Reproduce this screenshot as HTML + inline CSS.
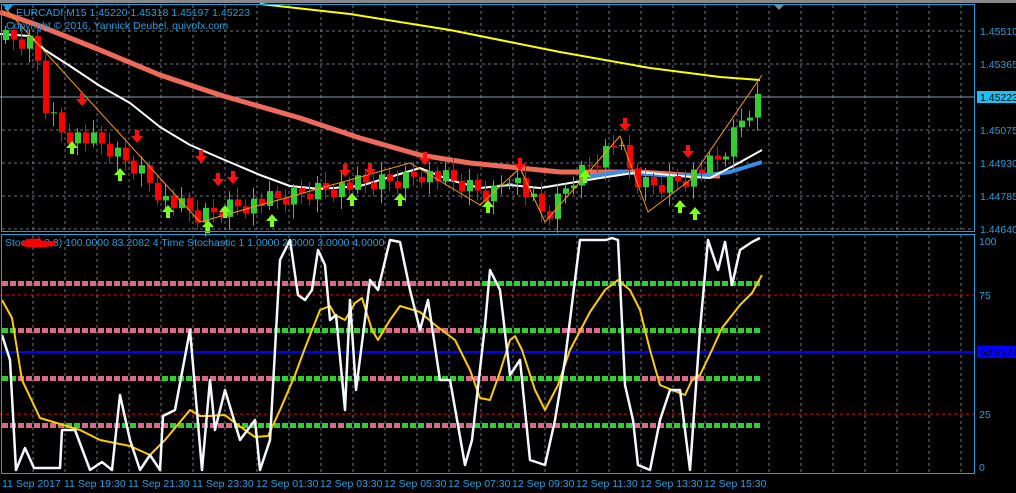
<!DOCTYPE html>
<html><head><meta charset="utf-8"><style>
html,body{margin:0;padding:0;background:#000;width:1016px;height:493px;overflow:hidden}
svg{display:block}
text{font-family:"Liberation Sans",sans-serif;font-size:10.5px}
</style></head><body>
<svg id="s" width="1016" height="493" xmlns="http://www.w3.org/2000/svg">
<rect width="1016" height="493" fill="#000"/>
<rect x="0" y="0" width="1016" height="3" fill="#888"/>
<g id="grid"></g>
<line x1="0" y1="97" x2="975" y2="97" stroke="#8a9aa8" stroke-width="1"/>
<line x1="0" y1="295" x2="975" y2="295" stroke="#e00" stroke-dasharray="3,3"/>
<line x1="0" y1="414" x2="975" y2="414" stroke="#e00" stroke-dasharray="3,3"/>
<g id="dots"></g>
<line x1="0" y1="352" x2="975" y2="352" stroke="#0000ff" stroke-width="2"/>
<g id="main"></g>
<rect x="1.5" y="4.5" width="973" height="227" fill="none" stroke="#1ea0e0"/>
<rect x="1.5" y="234.5" width="973" height="239" fill="none" stroke="#1ea0e0"/>
<polygon points="774,5 784,5 779,10" fill="#888"/>
<polygon points="3,5 13,5 8,11" fill="#1ea0e0"/>
<g fill="#1ea0e0">
<text x="980" y="35">1.45510</text>
<text x="980" y="68">1.45365</text>
<rect x="977" y="91" width="39" height="12" fill="#1ec0f0"/>
<text x="980" y="101" fill="#000">1.45223</text>
<text x="980" y="134">1.45075</text>
<text x="980" y="167">1.44930</text>
<text x="980" y="200">1.44785</text>
<text x="980" y="233">1.44640</text>
<text x="979" y="245">100</text>
<text x="979" y="299">75</text>
<rect x="977" y="346" width="39" height="12" fill="#0000ff"/>
<text x="980" y="356" fill="#000">50.8571</text>
<text x="979" y="418">25</text>
<text x="979" y="471">0</text>
<text x="16" y="16">EURCADf,M15  1.45220 1.45318 1.45197 1.45223</text>
<text x="6" y="29">Copyright © 2016, Yannick Deubel, quivofx.com</text>
<text x="5" y="246">Stoch(5,3,3) 100.0000 83.2082  4 Time Stochastic 1 1.0000 2.0000 3.0000 4.0000</text>
</g>
<path d="M22,243 q8,-6 16,-3 q10,3 18,1 l-2,4 q-12,3 -30,1z M38,236 l3,5" fill="#f00" stroke="#f00"/>
<g id="tl" fill="#1ea0e0"></g>
</svg>
<script>
(function(){
var NS="http://www.w3.org/2000/svg";
function el(p,t,a){var e=document.createElementNS(NS,t);for(var k in a)e.setAttribute(k,a[k]);p.appendChild(e);return e;}
var G=document.getElementById('grid'),M=document.getElementById('main'),D=document.getElementById('dots'),TL=document.getElementById('tl');
for(var x=33;x<975;x+=32){el(G,'line',{x1:x,y1:5,x2:x,y2:231,stroke:'#6a7480','stroke-dasharray':'3,3'});el(G,'line',{x1:x,y1:235,x2:x,y2:473,stroke:'#6a7480','stroke-dasharray':'3,3'});}
[31,64,130,163,196,229].forEach(function(y){el(G,'line',{x1:2,y1:y,x2:975,y2:y,stroke:'#6a7480','stroke-dasharray':'3,3'});});
var labs=["11 Sep 2017","11 Sep 19:30","11 Sep 21:30","11 Sep 23:30","12 Sep 01:30","12 Sep 03:30","12 Sep 05:30","12 Sep 07:30","12 Sep 09:30","12 Sep 11:30","12 Sep 13:30","12 Sep 15:30"];
labs.forEach(function(l,i){var t=el(TL,'text',{x:(i==0?2:64*i),y:487});t.textContent=l;});
var P='#d86a88',Gr='#33cc33';
var rows={283:[[0,P],[475,Gr]],330:[[0,Gr],[12,P],[270,Gr],[380,P],[470,Gr],[555,P],[600,Gr]],378:[[0,Gr],[12,P],[158,Gr],[190,P],[270,Gr],[365,P],[400,Gr],[460,P],[500,Gr],[640,P],[700,Gr]],425:[[0,P],[60,Gr],[78,P],[118,Gr],[135,P],[165,Gr],[200,P],[230,Gr],[330,P],[340,Gr],[370,P],[395,Gr],[420,P],[470,Gr],[520,P],[560,Gr],[630,P],[660,Gr]]};
for(var y in rows){var seg=rows[y];for(var x=2;x<762;x+=8){var c=seg[0][1];seg.forEach(function(s){if(x>=s[0])c=s[1];});el(D,'rect',{x:x,y:y-2,width:6,height:5,fill:c});}}
function interp(pts,x){if(x<=pts[0][0])return pts[0][1];for(var i=1;i<pts.length;i++){if(x<=pts[i][0]){var a=pts[i-1],b=pts[i];return a[1]+(b[1]-a[1])*(x-a[0])/(b[0]-a[0]);}}return pts[pts.length-1][1];}
function pl(pts,c,w){el(M,'polyline',{points:pts.map(function(p){return p.join(',')}).join(' '),fill:'none',stroke:c,'stroke-width':w,'stroke-linejoin':'round'});}
pl([[260,4],[350,14],[450,30],[560,52],[650,68],[720,77],[760,80]],'#ffff00',2);
pl([[0,12],[40,26],[100,50],[160,75],[220,95],[300,118],[360,138],[420,155],[470,163],[520,168],[560,172],[600,172],[640,172],[700,176],[720,176]],'#f06a5a',5);
pl([[580,178],[620,172],[660,175],[700,176],[730,172],[762,162]],'#3a8ee8',4);
pl([[0,34],[30,36],[45,50],[70,66],[100,86],[130,103],[160,127],[190,145],[220,158],[260,175],[290,186],[320,189],[360,186],[400,174],[420,168],[450,180],[480,188],[510,185],[540,188],[570,183],[600,178],[640,172],[680,176],[710,178],[735,165],[762,150]],'#ffffff',2);
var path=[[5,40],[35,45],[42,100],[60,130],[100,145],[140,170],[165,200],[200,218],[230,205],[280,200],[320,188],[360,185],[400,180],[420,172],[460,185],[490,195],[510,172],[530,200],[545,218],[555,205],[570,180],[600,155],[615,140],[625,165],[640,185],[660,185],[690,175],[720,160],[740,122],[756,100]];
var prev=interp(path,0);
for(var i=0;i<95;i++){var x=5+i*8;var c=interp(path,x)+((i*37)%11-5)*2;var o=prev;prev=c;
var up=c<o;var col=up?'#33cc33':'#ff0000';var tp=Math.min(o,c),bt=Math.max(o,c);if(bt-tp<1)bt=tp+1;
var wt=tp-4-(i*13%9),wb=bt+4+(i*7%11);
el(M,'line',{x1:x+0.5,y1:wt,x2:x+0.5,y2:wb,stroke:col});
el(M,'rect',{x:x-2,y:tp,width:6,height:bt-tp,fill:col});}
pl([[5,8],[200,222],[410,163],[480,205],[520,168],[545,222],[620,136],[648,212],[690,180],[762,75]],'#ff9900',1);
function dn(x,y){el(M,'path',{d:'M'+(x-2)+','+y+'h4v6h4l-6,7l-6,-7h4z',fill:'#ff1010'});}
function upA(x,y){el(M,'path',{d:'M'+(x-2)+','+(y+13)+'h4v-6h4l-6,-7l-6,7h4z',fill:'#7cff20'});}
[[82,93],[137,130],[201,150],[218,173],[233,171],[345,164],[370,163],[425,152],[520,158],[625,118],[688,145]].forEach(function(a){dn(a[0],a[1]);});
[[72,141],[120,168],[168,205],[208,220],[225,205],[272,214],[352,193],[400,193],[488,200],[585,170],[680,200],[695,207]].forEach(function(a){upA(a[0],a[1]);});
pl([[2,300],[12,318],[22,380],[40,418],[60,424],[80,430],[100,440],[130,446],[150,455],[165,440],[190,410],[200,416],[210,416],[225,415],[235,423],[255,437],[268,436],[280,410],[295,375],[305,348],[320,310],[330,306],[335,315],[345,320],[355,303],[362,298],[372,330],[378,340],[390,320],[400,306],[420,312],[435,325],[455,340],[470,370],[480,398],[490,400],[500,372],[510,340],[515,336],[522,350],[535,390],[545,410],[558,385],[570,350],[590,312],[605,290],[618,280],[630,290],[640,310],[650,350],[660,385],[672,390],[685,395],[692,380],[700,375],[712,350],[722,328],[740,305],[752,293],[762,275]],'#ffcc00',2);
pl([[2,335],[10,360],[16,470],[25,448],[34,468],[60,468],[62,430],[75,430],[90,470],[102,462],[112,470],[120,395],[130,440],[140,470],[150,455],[160,470],[163,416],[175,410],[190,330],[202,470],[210,380],[215,430],[225,390],[240,440],[255,420],[260,470],[270,440],[280,260],[290,240],[298,295],[305,300],[312,290],[318,250],[325,265],[330,320],[336,315],[345,410],[350,300],[356,390],[370,280],[378,290],[390,240],[400,242],[410,290],[420,330],[428,300],[440,380],[450,380],[465,465],[472,440],[485,325],[490,270],[500,290],[510,375],[520,360],[530,460],[545,465],[555,420],[565,360],[580,240],[590,240],[606,240],[612,238],[618,240],[625,385],[633,420],[638,465],[650,470],[660,420],[670,390],[680,390],[690,470],[700,330],[708,240],[718,270],[725,242],[732,285],[740,250],[752,242],[760,238]],'#f4f8ff',2.5);
})();
</script>
</body></html>
